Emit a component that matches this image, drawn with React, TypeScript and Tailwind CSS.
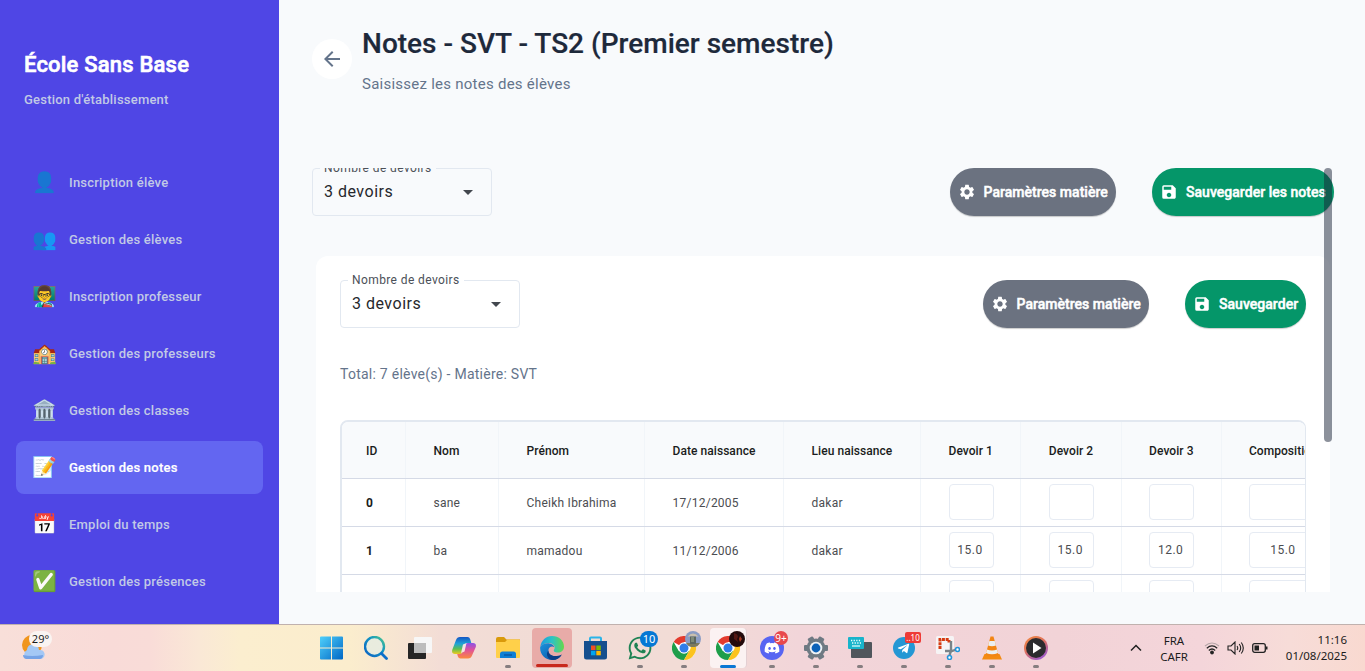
import React from "react";
import { MdArrowBack, MdArrowDropDown, MdSave, MdSettings } from "react-icons/md";
import { FaWhatsapp, FaTelegramPlane, FaDiscord } from "react-icons/fa";

const menu = [
  { icon: "👤", label: "Inscription élève" },
  { icon: "👥", label: "Gestion des élèves" },
  { icon: "👨‍🏫", label: "Inscription professeur" },
  { icon: "🏫", label: "Gestion des professeurs" },
  { icon: "🏛️", label: "Gestion des classes" },
  { icon: "📝", label: "Gestion des notes", active: true },
  { icon: "📅", label: "Emploi du temps" },
  { icon: "✅", label: "Gestion des présences" },
];

function Sidebar() {
  return (
    <aside className="flex w-[279px] shrink-0 flex-col bg-[#4f46e5]">
      <div className="h-[156px] px-6 pt-[49px]">
        <h1 className="text-[22px] leading-8 font-medium tracking-[0.2px] whitespace-nowrap text-white [-webkit-text-stroke:0.6px_white]">École Sans Base</h1>
        <p className="mt-[9px] text-[13px] leading-5 font-medium tracking-[0.22px] whitespace-nowrap text-[#c1c9e6]">Gestion d'établissement</p>
      </div>
      <nav className="flex flex-col gap-1 px-4">
        {menu.map((m) => (
          <div key={m.label} className={m.active ? "flex h-[53px] items-center rounded-lg bg-[#6366f1] pl-4 text-white" : "flex h-[53px] items-center rounded-lg pl-4 text-[#c1c9e6]"}>
            <span className="w-[37px] pb-[2px] font-['Noto_Color_Emoji'] text-[20px] leading-6">{m.icon}</span>
            <span className={m.active ? "text-[13px] font-medium tracking-[0.22px] [-webkit-text-stroke:0.2px_white]" : "text-[13px] font-medium tracking-[0.22px]"}>{m.label}</span>
          </div>
        ))}
      </nav>
    </aside>
  );
}

function DevoirSelect({ onCard }: { onCard?: boolean }) {
  return (
    <div className="relative flex h-12 w-[180px] items-center justify-between rounded-[4px] border border-[#e2e8f0] pr-[11px] pl-[11px]">
      <span className={onCard ? "absolute top-[-9px] left-[7px] bg-white px-1 text-xs leading-4 tracking-[0.4px] whitespace-nowrap text-[#4b5058]" : "absolute top-[-9px] left-[7px] bg-[#f8fafc] px-1 text-xs leading-4 tracking-[0.4px] whitespace-nowrap text-[#4b5058]"}>
        Nombre de devoirs
      </span>
      <span className="text-base tracking-[0.5px] text-[#26282c]">3 devoirs</span>
      <MdArrowDropDown className="size-6 text-[#42474e]" />
    </div>
  );
}

function PillButton({ kind, label }: { kind: "params" | "save"; label: string }) {
  const params = kind === "params";
  return (
    <button
      className={
        params
          ? "flex h-12 w-[166.5px] items-center rounded-full bg-[#6b7280] pl-2 text-white shadow-[0_1px_1px_rgba(0,0,0,0.2)]"
          : "flex h-12 items-center rounded-full bg-[#059669] pr-2 pl-2 text-white shadow-[0_1px_1px_rgba(0,0,0,0.2)]"
      }
    >
      {params ? <MdSettings className="size-[18px]" /> : <MdSave className="size-[18px]" />}
      <span className="ml-2 text-[14px] font-medium tracking-[0.03px] whitespace-nowrap [-webkit-text-stroke:0.45px_white]">{label}</span>
    </button>
  );
}

const cols = [
  { w: "w-[64px] pl-6", t: "ID" },
  { w: "w-[93px] pl-[27.5px]", t: "Nom" },
  { w: "w-[146px] pl-[27.5px]", t: "Prénom" },
  { w: "w-[139px] pl-[27.5px]", t: "Date naissance" },
  { w: "w-[137px] pl-[27.5px]", t: "Lieu naissance" },
  { w: "w-[100.3px] pl-[27.5px]", t: "Devoir 1" },
  { w: "w-[100.3px] pl-[27.5px]", t: "Devoir 2" },
  { w: "w-[100.3px] pl-[27.5px]", t: "Devoir 3" },
  { w: "w-[140px] pl-[27px]", t: "Composition" },
];

const rows = [
  { text: ["0", "sane", "Cheikh Ibrahima", "17/12/2005", "dakar"], marks: ["", "", "", ""] },
  { text: ["1", "ba", "mamadou", "11/12/2006", "dakar"], marks: ["15.0", "15.0", "12.0", "15.0"] },
  { text: ["", "", "", "", ""], marks: ["", "", "", ""] },
];

function NotesTable() {
  return (
    <div className="overflow-hidden rounded-lg border border-t-2 border-l-2 border-[#e2e8f0] bg-white">
      <div className="flex h-[57px] w-max border-b border-[#d5dae6] bg-[#f8fafc]">
        {cols.map((c) => (
          <div key={c.t} className={`${c.w} flex shrink-0 items-center border-r border-[#f1f5f9] pt-[2px] text-xs font-medium tracking-[0.06px] whitespace-nowrap text-[#1a1c20]`}>{c.t}</div>
        ))}
      </div>
      {rows.map((r, i) => (
        <div key={i} className="flex h-12 w-max border-b border-[#d5dae6]">
          {r.text.map((t, j) => (
            <div key={j} className={`${cols[j].w} flex shrink-0 items-center border-r border-[#f1f5f9] text-xs whitespace-nowrap ${j === 0 ? "font-bold text-[#1a1c20]" : "tracking-[0.25px] text-[#4b4d51]"}`}>{t}</div>
          ))}
          {r.marks.map((m, j) => (
            <div key={j} className={`${cols[j + 5].w} flex shrink-0 items-start border-r border-[#f1f5f9] pt-[5px]`}>
              <div className={j === 3 ? "flex h-9 w-[68px] items-center justify-center rounded-[4px] border border-[#e6ebf3] pb-px text-xs tracking-[0.5px] text-[#4b4d51]" : "flex h-9 w-[45px] items-center justify-center rounded-[4px] border border-[#e6ebf3] pr-[2px] pb-px text-xs tracking-[0.5px] text-[#4b4d51]"}>{m}</div>
            </div>
          ))}
        </div>
      ))}
    </div>
  );
}

function Main() {
  return (
    <main className="flex min-w-0 flex-1 flex-col bg-[#f8fafc] pl-[33px]">
      <header className="flex h-[168px] pt-[26px]">
        <div className="mt-[13px] flex size-10 items-center justify-center rounded-full bg-white">
          <MdArrowBack className="size-6 text-[#64748b]" />
        </div>
        <div className="ml-[10px] whitespace-nowrap">
          <h2 className="text-[28px] leading-9 font-medium tracking-[0.01px] text-[#1e293b] [-webkit-text-stroke:0.2px_#1e293b]">Notes - SVT - TS2 (Premier semestre)</h2>
          <p className="mt-3 text-[15px] leading-5 tracking-[0.25px] text-[#64748b]">Saisissez les notes des élèves</p>
        </div>
      </header>
      <section className="relative h-[424px] overflow-hidden">
        <div className="flex w-[1022px] justify-between">
          <DevoirSelect />
          <div className="flex gap-9">
            <PillButton kind="params" label="Paramètres matière" />
            <div className="grid w-[182px]"><PillButton kind="save" label="Sauvegarder les notes" /></div>
          </div>
        </div>
        <div className="mt-10 ml-1 h-[600px] w-[1014px] rounded-xl bg-white p-6">
          <div className="flex justify-between">
            <DevoirSelect onCard />
            <div className="flex gap-9">
              <PillButton kind="params" label="Paramètres matière" />
              <div className="grid w-[121px]"><PillButton kind="save" label="Sauvegarder" /></div>
            </div>
          </div>
          <p className="mt-9 mb-9 text-[14px] leading-5 tracking-[0.25px] text-[#64748b]">Total: 7 élève(s) - Matière: SVT</p>
          <NotesTable />
        </div>
        <div className="absolute top-0 left-[1012px] h-[274px] w-2 rounded-full bg-[#192337]/50" />
      </section>
    </main>
  );
}

function Chrome() {
  return (
    <svg viewBox="0 0 24 24" className="size-6">
      <circle cx="12" cy="12" r="12" fill="#fff" />
      <path d="M12 12 1.600 6A12 12 0 0 1 22.400 6H12Z" fill="#e33b2e" />
      <path d="M1.600 6A12 12 0 0 0 12 24l5.200-9L12 12 6.800 15Z" fill="#1e9e4a" />
      <path d="M22.400 6A12 12 0 0 1 12 24l5.200-9a6 6 0 0 0-1-9Z" fill="#fcc31e" />
      <circle cx="12" cy="12" r="5.700" fill="#fff" />
      <circle cx="12" cy="12" r="4.500" fill="#2f7de9" />
    </svg>
  );
}

const taskIcons: { id: string; el: React.ReactNode; dot?: boolean }[] = [
  {
    id: "start",
    el: (
      <svg viewBox="0 0 24 24" className="size-6">
        <defs><linearGradient id="win" x1="0" y1="0" x2="1" y2="1"><stop stopColor="#4fd0fb" /><stop offset="1" stopColor="#0067c5" /></linearGradient></defs>
        <path fill="url(#win)" d="M0 1.500Q0 .5 1 .5h10v11H0ZM12 .5h10q1 0 1 1v10H12ZM0 12.500h11v11H1q-1 0-1-1ZM12 12.500h11v10q0 1-1 1H12Z" />
      </svg>
    ),
  },
  {
    id: "search",
    el: (
      <svg viewBox="0 0 24 24" className="size-6" fill="none">
        <defs><linearGradient id="sea" x1="1" y1="0" x2="0" y2="1"><stop stopColor="#4fc98a" /><stop offset=".4" stopColor="#1193c4" /><stop offset="1" stopColor="#0d62c4" /></linearGradient></defs>
        <circle cx="10.500" cy="10.500" r="9.500" fill="#d9efee" fillOpacity=".5" stroke="url(#sea)" strokeWidth="2.400" />
        <path d="m17.500 17.500 5 5" stroke="#0d6fca" strokeWidth="2.800" strokeLinecap="round" />
      </svg>
    ),
  },
  {
    id: "taskview",
    el: (
      <svg viewBox="0 0 24 24" className="size-6">
        <rect x="0" y="7" width="18" height="16" rx="1" fill="#262626" />
        <rect x="6" y="1" width="18" height="16" rx="1" fill="#f7f7f7" />
        <path d="M6 7h12v10H7q-1 0-1-1Z" fill="#bdbdbd" />
      </svg>
    ),
  },
  {
    id: "copilot",
    el: (
      <svg viewBox="0 0 24 24" className="size-6">
        <defs>
          <linearGradient id="cpa" x1="0" y1="0" x2="0" y2="1"><stop stopColor="#1555c4" /><stop offset=".4" stopColor="#1ea3d8" /><stop offset=".7" stopColor="#5cbf52" /><stop offset="1" stopColor="#f0c91e" /></linearGradient>
          <linearGradient id="cpb" x1="0" y1="0" x2="0" y2="1"><stop stopColor="#8a52e8" /><stop offset=".45" stopColor="#e0529a" /><stop offset="1" stopColor="#fb8a3c" /></linearGradient>
        </defs>
        <path d="M8 1h7.500q2 0 2.600 2l1.200 4h-3.400q-2 0-2.600 2l-2 7q-.7 2-2.800 2H3q-3.600 0-2.800-4L4 4q1-3 4-3Z" fill="url(#cpa)" />
        <path d="M16 22.500H8.500q-2 0-2.600-2L5.200 18H8q2 0 2.600-2l2.400-7q.7-2 2.800-2H21q3.600 0 2.800 4L20 19.500q-1 3-4 3Z" fill="url(#cpb)" />
        <path d="m11 8.500 3.500-1.500-2 8.500-3.500 1.500Z" fill="#f6e4e4" />
      </svg>
    ),
  },
  {
    id: "explorer",
    dot: true,
    el: (
      <svg viewBox="0 0 24 24" className="size-6">
        <path d="M0 3q0-2 2-2h6l2.500 2.500H24V9H0Z" fill="#d99a0b" />
        <path d="M0 6h9l2.500-2.500H23q1 0 1 1V21q0 1-1 1H1q-1 0-1-1Z" fill="#ffd04a" />
        <path d="M4 22v-4q0-2.500 2.500-2.500h11Q20 15.500 20 18v4Z" fill="#0f7fd6" />
        <path d="M8 19h8" stroke="#0a57a5" strokeWidth="1.500" />
      </svg>
    ),
  },
  {
    id: "edge",
    el: (
      <svg viewBox="0 0 24 24" className="size-6">
        <defs>
          <linearGradient id="eda" x1="0" y1="0" x2="1" y2="0"><stop stopColor="#1d9be0" /><stop offset=".5" stopColor="#2cc3c4" /><stop offset="1" stopColor="#66d84a" /></linearGradient>
          <linearGradient id="edb" x1="0" y1="0" x2="1" y2="1"><stop stopColor="#1b93dc" /><stop offset="1" stopColor="#0b4ea2" /></linearGradient>
        </defs>
        <path d="M.3 11C1 4.500 6 0 12 0c7 0 12 4.800 12 10.500 0 4-3 6-6 6-3.500 0-4.800-1.500-4-2.800 2-2.700-.4-6.700-5-6.700C4.500 7 1.500 9 .3 11Z" fill="url(#eda)" />
        <path d="M.2 11C1.500 8.500 5 7 8.500 7.200c3 .2 5.300 1.800 5.900 4-2-1.600-6-.6-6 3.300 0 4.500 5 7.500 12.600 5.300-2.200 3-5.500 4.200-9 4.200C5 24-.5 18 .2 11Z" fill="url(#edb)" />
        <path d="M8.400 14.500c0 4.500 5 7.500 13.600 4-2 3.500-5.500 5.500-9 5.500-5 0-8-6-4.600-9.500Z" fill="#0b3f86" />
      </svg>
    ),
  },
  {
    id: "store",
    el: (
      <svg viewBox="0 0 24 24" className="size-6">
        <path d="M6 6V2.500q0-1 1-1h9q1 0 1 1V6" fill="none" stroke="#2ab4e8" strokeWidth="2" />
        <path d="M0 5h23v16q0 2.500-2.500 2.500h-18Q0 23.500 0 21Z" fill="#164f8e" />
        <path d="M7 9.500h4.500V14H7Z" fill="#f25022" /><path d="M12.300 9.500h4.500V14h-4.500Z" fill="#7fba00" />
        <path d="M7 14.800h4.500v4.500H7Z" fill="#00a4ef" /><path d="M12.300 14.800h4.500v4.500h-4.500Z" fill="#ffb900" />
      </svg>
    ),
  },
  { id: "whatsapp", dot: true, el: <><FaWhatsapp className="size-[26px] text-[#1f8354]" /><span className="absolute top-[3px] left-5 flex h-4 w-[18px] items-center justify-center rounded-full bg-[#0678d4] text-[11px] text-white">10</span></> },
  {
    id: "chrome1",
    dot: true,
    el: (
      <>
        <Chrome />
        <svg viewBox="0 0 16 16" className="absolute top-[3px] left-[21px] size-4"><circle cx="8" cy="8" r="8" fill="#8b9cc4" /><path d="M1 12h14a8 8 0 0 1-14 0Z" fill="#7d7a5e" /><path d="M2.500 5.500q5.500-6 11 0Z" fill="#c9bfae" /><path d="M5 5.500h6V13H5Z" fill="#5c665e" /><path d="M6 6h3v5H6Z" fill="#7f8a78" /></svg>
      </>
    ),
  },
  {
    id: "chrome2",
    el: (
      <>
        <Chrome />
        <svg viewBox="0 0 16 16" className="absolute top-[3px] left-[19px] size-4"><circle cx="8" cy="8" r="8" fill="#230b0c" /><path d="M5 2q4 1 4 4L8 8l1 3-4-3Z" fill="#541713" /><path d="m11 5 2 3-2 3-1-3Z" fill="#a33a22" /></svg>
      </>
    ),
  },
  { id: "discord", dot: true, el: <><span className="flex size-6 items-center justify-center rounded-full bg-[#5865f2]"><FaDiscord className="size-4 text-white" /></span><span className="absolute top-[3px] left-[22px] flex size-[14px] items-center justify-center rounded-full bg-[#e8484c] text-[10px] text-white">9+</span></> },
  {
    id: "settings",
    dot: true,
    el: (
      <svg viewBox="0 0 24 24" className="size-6">
        <g fill="#6f7a83"><circle cx="12" cy="12" r="9.500" /><rect x="9" y="0" width="6" height="24" rx="1" transform="rotate(30 12 12)" /><rect x="9" y="0" width="6" height="24" rx="1" transform="rotate(90 12 12)" /><rect x="9" y="0" width="6" height="24" rx="1" transform="rotate(150 12 12)" /></g>
        <circle cx="12" cy="12" r="6.300" fill="#eef2f5" /><circle cx="12" cy="12" r="4.400" fill="#0c62b8" />
      </svg>
    ),
  },
  {
    id: "keyboard",
    dot: true,
    el: (
      <svg viewBox="0 0 24 24" className="size-6">
        <rect x="3" y="6" width="21" height="16" rx="1" fill="#50565c" />
        <rect x="0" y="1" width="16" height="12" rx="1" fill="#18b4cb" />
        <path d="M3 4.500h10M4 7h9" stroke="#e8ffff" strokeWidth="1.300" strokeDasharray="1.300 1.300" /><path d="M4 10h8" stroke="#e8ffff" strokeWidth="1.200" />
      </svg>
    ),
  },
  { id: "telegram", dot: true, el: <><span className="flex size-[22px] items-center justify-center rounded-full bg-[#2497d4]"><FaTelegramPlane className="mr-px size-[13px] text-white" /></span><span className="absolute top-[4px] left-[21px] flex h-[11px] w-4 items-center justify-center rounded-[2px] bg-[#ee3a36] text-[8px] text-white">..10</span></> },
  {
    id: "snip",
    dot: true,
    el: (
      <svg viewBox="0 0 24 24" className="size-6">
        <rect x="0" y="0" width="18" height="18" rx="1.500" fill="#f6f4f5" />
        <path d="M4 13V3.500h9v3" fill="none" stroke="#d63b11" strokeWidth="3" strokeDasharray="3 .8" />
        <path d="M15 5v10l-1.500 4M9 15h7l4-1.500" fill="none" stroke="#7a8389" strokeWidth="2.400" />
        <circle cx="21.500" cy="13.500" r="2" fill="#fff" stroke="#2196dc" strokeWidth="1.600" /><circle cx="13.500" cy="21.500" r="2" fill="#fff" stroke="#2196dc" strokeWidth="1.600" />
      </svg>
    ),
  },
  {
    id: "vlc",
    dot: true,
    el: (
      <svg viewBox="0 0 24 24" className="size-6">
        <path d="M4.500 18h15l2.500 5.500H2Z" fill="#f38b12" />
        <path d="M10.500.5h3L18.500 19q-6.500 3-13 0Z" fill="#f28514" />
        <path d="m9.400 5 5.300 0 1.300 4.500q-4 1.500-7.900 0ZM7 13.500q5 2 10 0l1 3.500q-6 2.500-12 0Z" fill="#eceff0" />
      </svg>
    ),
  },
  {
    id: "media",
    dot: true,
    el: (
      <svg viewBox="0 0 24 24" className="size-6">
        <defs><linearGradient id="med" x1="0" y1="0" x2=".6" y2="1"><stop stopColor="#f28a3d" /><stop offset=".5" stopColor="#e0725e" /><stop offset="1" stopColor="#a05bc8" /></linearGradient></defs>
        <circle cx="12" cy="12" r="12" fill="url(#med)" /><circle cx="12" cy="12" r="10" fill="#2b2b2e" /><path d="m9 6.500 8.500 5.500L9 17.500Z" fill="#fff" />
      </svg>
    ),
  },
];

function Taskbar() {
  return (
    <footer className="flex h-[47px] shrink-0 border-t border-[#c0b1ae] bg-[linear-gradient(90deg,#f8dfd9_0,#f9dbd8_110px,#f9dcd8_150px,#fae8d6_200px,#fbeecf_240px,#fbedcd_350px,#f3ddd6_440px,#f1dcd6_540px,#f2dcd6_680px,#f2d5d9_800px,#f2d3d7_1060px,#f4d5da_1200px,#f7dcd8_1290px,#f9d9d0_1365px)] font-['Noto_Sans',sans-serif] text-[#1c1c1c]">
      <div className="w-[310px]">
        <div className="relative mt-[10px] ml-[21px] size-6">
          <svg viewBox="0 0 24 24" className="size-6">
            <circle cx="11" cy="10" r="10" fill="#f0951d" />
            <path d="M6 24a5 5 0 0 1 0-9 6 6 0 0 1 12 0 4.500 4.500 0 0 1 2 9Z" fill="#a4c8f5" /><path d="M5 24q-3-1-3-4 9 2 20 0 0 3-3 4Z" fill="#76a3e6" />
          </svg>
          <span className="absolute top-[-4px] left-[8px] flex h-4 w-[23px] items-center justify-center rounded-full bg-[#faf4f1] text-[11px]">29°</span>
        </div>
      </div>
      <div className="flex">
        {taskIcons.map((t) => (
          <div key={t.id} className="flex w-11 justify-center pt-[3px]">
            <div
              className={
                t.id === "edge"
                  ? "relative -mx-px flex h-10 w-10 flex-col items-center rounded-[4px] bg-[#e8aba8]"
                  : t.id === "chrome2"
                    ? "relative -mx-px flex h-10 w-[37px] flex-col items-center rounded-[4px] border-r border-[#e3cfd2] bg-[#fbf2f2]"
                    : "relative flex h-10 w-10 flex-col items-center"
              }
            >
              <div className="flex h-10 items-center">{t.el}</div>
              {t.dot && <div className="absolute bottom-0 h-[3px] w-[6px] rounded-full bg-[#857e80]" />}
              {t.id === "edge" && <div className="absolute bottom-[1px] h-[3px] w-8 rounded-full bg-[#c8281c]" />}
              {t.id === "chrome2" && <div className="absolute bottom-0 h-[3px] w-4 rounded-full bg-[#0a78d4]" />}
            </div>
          </div>
        ))}
      </div>
      <div className="flex flex-1 items-center justify-end pr-[18px] text-[11.500px] leading-4">
        <svg viewBox="0 0 12 8" className="h-2 w-3" fill="none" stroke="#222" strokeWidth="1.500"><path d="m1 6.500 5-5 5 5" /></svg>
        <div className="ml-[17px] w-[30px] pt-px text-center">FRA<br />CAFR</div>
        <svg viewBox="0 0 16 14" className="ml-[15px] h-[14px] w-4" fill="none" stroke="#222" strokeWidth="1.200">
          <path d="M1 5q7-6 14 0" stroke="#b6a6a8" /><path d="M2.800 7.200q5.200-4.600 10.400 0M4.800 9.500q3.200-3 6.400 0" /><circle cx="8" cy="11.500" r="1.300" fill="#222" />
        </svg>
        <svg viewBox="0 0 18 14" className="ml-[7px] h-[14px] w-[18px]" fill="none" stroke="#222" strokeWidth="1.100">
          <path d="M1 5h3l4-4v12l-4-4H1ZM10 5q1.500 2 0 4M12.200 3q3 4 0 8M14.300 1.500q4 5.500 0 11" />
        </svg>
        <svg viewBox="0 0 16 12" className="ml-[7px] h-3 w-4"><rect x=".7" y="1.700" width="12.600" height="8.600" rx="2" fill="none" stroke="#222" strokeWidth="1.300" /><rect x="2.500" y="3.500" width="4.500" height="5" fill="#222" /><path d="M14 4.500h1.500v3H14Z" fill="#222" /></svg>
        <div className="ml-[13px] w-[66px] text-right whitespace-nowrap">11:16<br />01/08/2025</div>
      </div>
    </footer>
  );
}

export default function App() {
  return (
    <div className="flex h-[671px] w-[1365px] flex-col overflow-hidden font-['Roboto',sans-serif]">
      <div className="flex h-[624px]">
        <Sidebar />
        <Main />
      </div>
      <Taskbar />
    </div>
  );
}
